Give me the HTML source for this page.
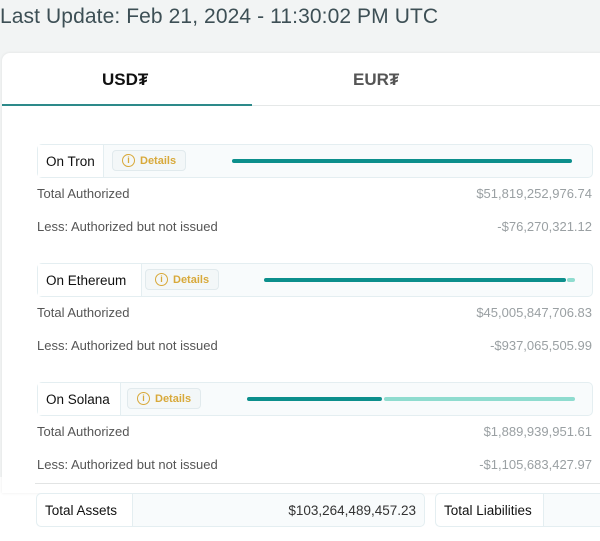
<!DOCTYPE html>
<html><head><style>
body{margin:0;width:600px;height:541px;background:#fff;font-family:"Liberation Sans",sans-serif;position:relative;overflow:hidden}
.top{position:absolute;left:0;top:0;width:600px;height:477px;background:#f2f4f4}
h1{position:absolute;left:0;top:5px;margin:0;font-size:21px;font-weight:normal;color:#3d4f55;white-space:nowrap;letter-spacing:0.1px}
.card{position:absolute;left:2px;top:53px;width:610px;height:440px;background:#fff;border-radius:8px 0 0 0;box-shadow:0 0 3px rgba(0,0,0,.08)}
.tab{position:absolute;top:70px;font-size:17px;font-weight:bold;color:#111}
.a{position:absolute;border:1px solid #e4eef1;background:#f8fbfc;border-radius:5px}
.lab{position:absolute;font-size:13.5px;color:#111;background:#fff;border-right:1px solid #e4eef1;height:100%;display:flex;align-items:center;padding-left:8px;box-sizing:border-box}
.det{position:absolute;top:5px;height:21px;border:1px solid #e1eaed;border-radius:4px;background:#f3f7f8;color:#d8a93a;font-size:11px;font-weight:bold;display:flex;align-items:center;padding-left:9px;box-sizing:border-box}
.det i{display:inline-block;width:11px;height:11px;border:1.3px solid #d8a93a;border-radius:50%;font-style:normal;font-size:9px;text-align:center;line-height:11px;margin-right:5px;font-weight:bold}
.bar{position:absolute;height:4px;border-radius:2px}
.t{position:absolute;left:37px;font-size:13px;color:#555}
.v{position:absolute;right:8px;font-size:13px;color:#9aa0a3}
</style></head><body>
<div class="top"></div>
<h1>Last Update: Feb 21, 2024 - 11:30:02 PM UTC</h1>
<div class="card"></div>
<div class="tab" style="left:102px">USD₮</div>
<div class="tab" style="left:353px;color:#555">EUR₮</div>
<div style="position:absolute;left:2px;top:104px;width:250px;height:2px;background:#2d8a8a"></div>
<div style="position:absolute;left:252px;top:105px;width:348px;height:1px;background:#e5e8e8"></div>

<div class="a" style="left:37px;top:144px;width:554px;height:32px"><div class="lab" style="width:66px">On Tron</div><div class="det" style="left:74px;width:74px"><i>i</i>Details</div>
<div class="bar" style="left:194px;top:14px;width:340px;background:#0c8f8c"></div></div>
<div class="t" style="top:186px">Total Authorized</div><div class="v" style="top:186px">$51,819,252,976.74</div>
<div class="t" style="top:219px">Less: Authorized but not issued</div><div class="v" style="top:219px">-$76,270,321.12</div>

<div class="a" style="left:37px;top:263px;width:554px;height:32px"><div class="lab" style="width:104px">On Ethereum</div><div class="det" style="left:107px;width:74px"><i>i</i>Details</div>
<div class="bar" style="left:226px;top:14px;width:302px;background:#0c8f8c"></div><div class="bar" style="left:529px;top:14px;width:8px;background:#8fdccf"></div></div>
<div class="t" style="top:305px">Total Authorized</div><div class="v" style="top:305px">$45,005,847,706.83</div>
<div class="t" style="top:338px">Less: Authorized but not issued</div><div class="v" style="top:338px">-$937,065,505.99</div>

<div class="a" style="left:37px;top:382px;width:554px;height:32px"><div class="lab" style="width:83px">On Solana</div><div class="det" style="left:89px;width:74px"><i>i</i>Details</div>
<div class="bar" style="left:209px;top:14px;width:135px;background:#0c8f8c"></div><div class="bar" style="left:346px;top:14px;width:191px;background:#8fdccf"></div></div>
<div class="t" style="top:424px">Total Authorized</div><div class="v" style="top:424px">$1,889,939,951.61</div>
<div class="t" style="top:457px">Less: Authorized but not issued</div><div class="v" style="top:457px">-$1,105,683,427.97</div>

<div style="position:absolute;left:35px;top:483px;width:565px;height:1px;background:#e2e4e4"></div>
<div class="a" style="left:36px;top:493px;width:387px;height:32px"><div class="lab" style="width:96px;font-size:13.5px;border-radius:5px 0 0 5px">Total Assets</div><div style="position:absolute;right:8px;top:9px;font-size:13.5px;color:#333">$103,264,489,457.23</div></div>
<div class="a" style="left:435px;top:493px;width:180px;height:32px"><div class="lab" style="width:108px;font-size:13.5px;border-radius:5px 0 0 5px">Total Liabilities</div></div>
</body></html>
